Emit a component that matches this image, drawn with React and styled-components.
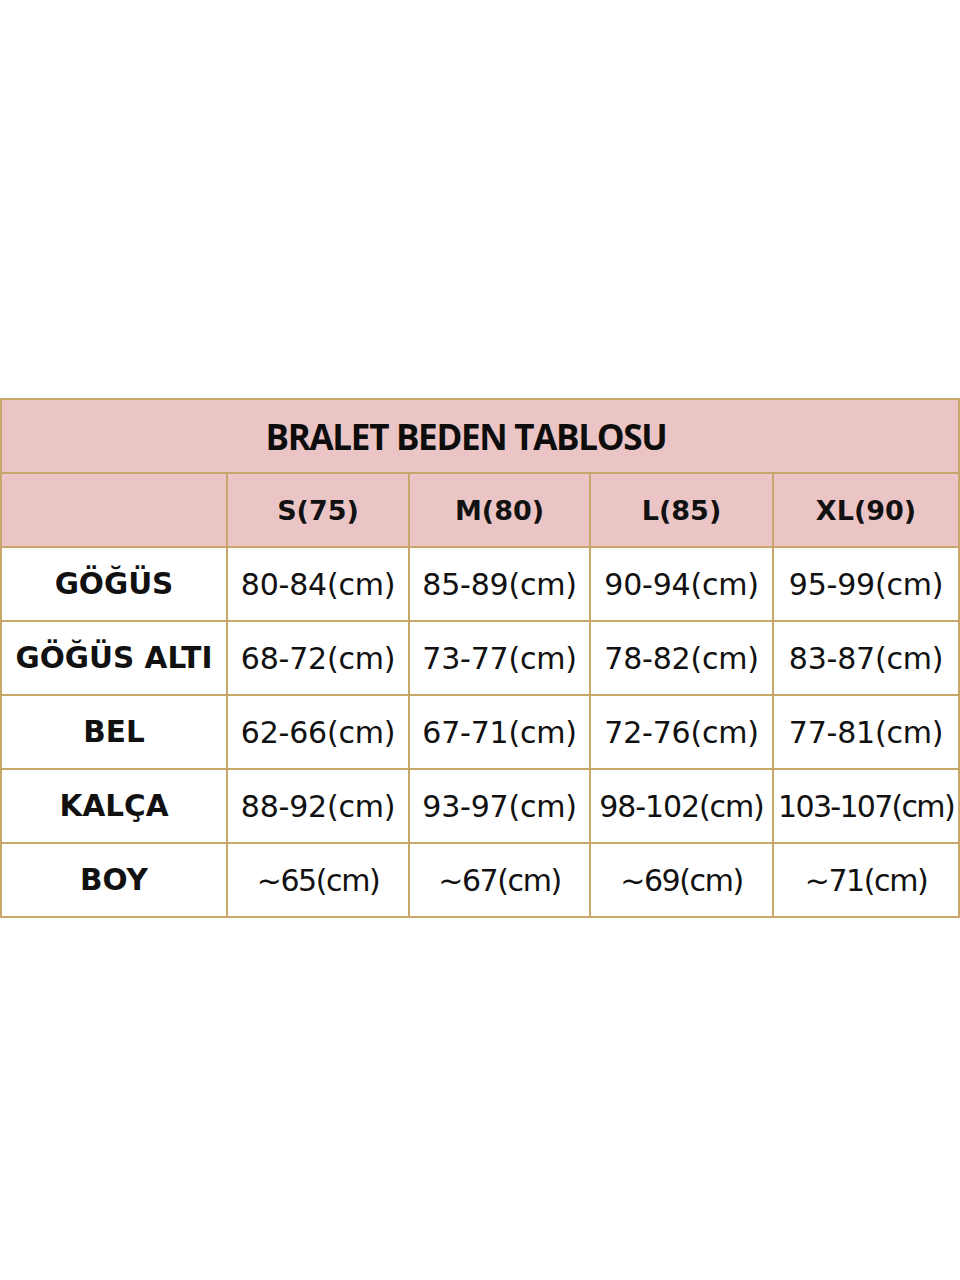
import React from "react";
import styled, { createGlobalStyle } from "styled-components";

const Global = createGlobalStyle`
  html, body { margin: 0; padding: 0; background: #ffffff; }
  body { font-family: "DejaVu Sans", "Open Sans", sans-serif; color: #111; }
`;

const Page = styled.div`
  width: 960px;
  height: 1280px;
  padding-top: 398px;
  box-sizing: border-box;
`;

const Table = styled.div`
  display: grid;
  grid-template-columns: 224px 180px 179px 181px 1fr;
  grid-auto-rows: 72px;
  gap: 2px;
  padding: 2px;
  background: #c9a66b;
  width: 960px;
  box-sizing: border-box;
`;

const Title = styled.div`
  grid-column: 1 / -1;
  background: #ebc5c5;
  display: flex;
  align-items: center;
  justify-content: center;
  padding-right: 28px;
  font-family: "Open Sans", sans-serif;
  font-weight: 700;
  font-size: 35px;
  letter-spacing: -1.3px;
  color: #0d0d0d;
`;

const Cell = styled.div`
  background: ${(p) => (p.$head ? "#ebc5c5" : "#ffffff")};
  display: flex;
  align-items: center;
  justify-content: center;
  white-space: nowrap;
  color: #111;
  font-weight: 400;
  font-size: 30px;
  letter-spacing: ${(p) => p.$ls ?? -0.2}px;
`;

const HeadCell = styled(Cell)`
  background: #ebc5c5;
  font-weight: 700;
  font-size: 27px;
  letter-spacing: 0;
`;

const LabelCell = styled(Cell)`
  font-weight: 700;
  font-size: 29.5px;
  letter-spacing: 0;
`;

const sizes = ["S(75)", "M(80)", "L(85)", "XL(90)"];
const rows = [
  ["GÖĞÜS", "80-84(cm)", "85-89(cm)", "90-94(cm)", "95-99(cm)"],
  ["GÖĞÜS ALTI", "68-72(cm)", "73-77(cm)", "78-82(cm)", "83-87(cm)"],
  ["BEL", "62-66(cm)", "67-71(cm)", "72-76(cm)", "77-81(cm)"],
  ["KALÇA", "88-92(cm)", "93-97(cm)", "98-102(cm)", "103-107(cm)"],
  ["BOY", "~65(cm)", "~67(cm)", "~69(cm)", "~71(cm)"],
];

const spacingFor = (v) => {
  if (v.startsWith("~")) return -1.4;
  if (v.length >= 11) return -1.7;
  if (v.length === 10) return -1.1;
  return -0.2;
};

export default function App() {
  return (
    <Page>
      <Global />
      <Table>
        <Title>BRALET BEDEN TABLOSU</Title>
        <HeadCell />
        {sizes.map((s) => (
          <HeadCell key={s}>{s}</HeadCell>
        ))}
        {rows.map((r) =>
          r.map((v, i) =>
            i === 0 ? (
              <LabelCell key={r[0]}>{v}</LabelCell>
            ) : (
              <Cell key={r[0] + i} $ls={spacingFor(v)}>
                {v}
              </Cell>
            )
          )
        )}
      </Table>
    </Page>
  );
}
